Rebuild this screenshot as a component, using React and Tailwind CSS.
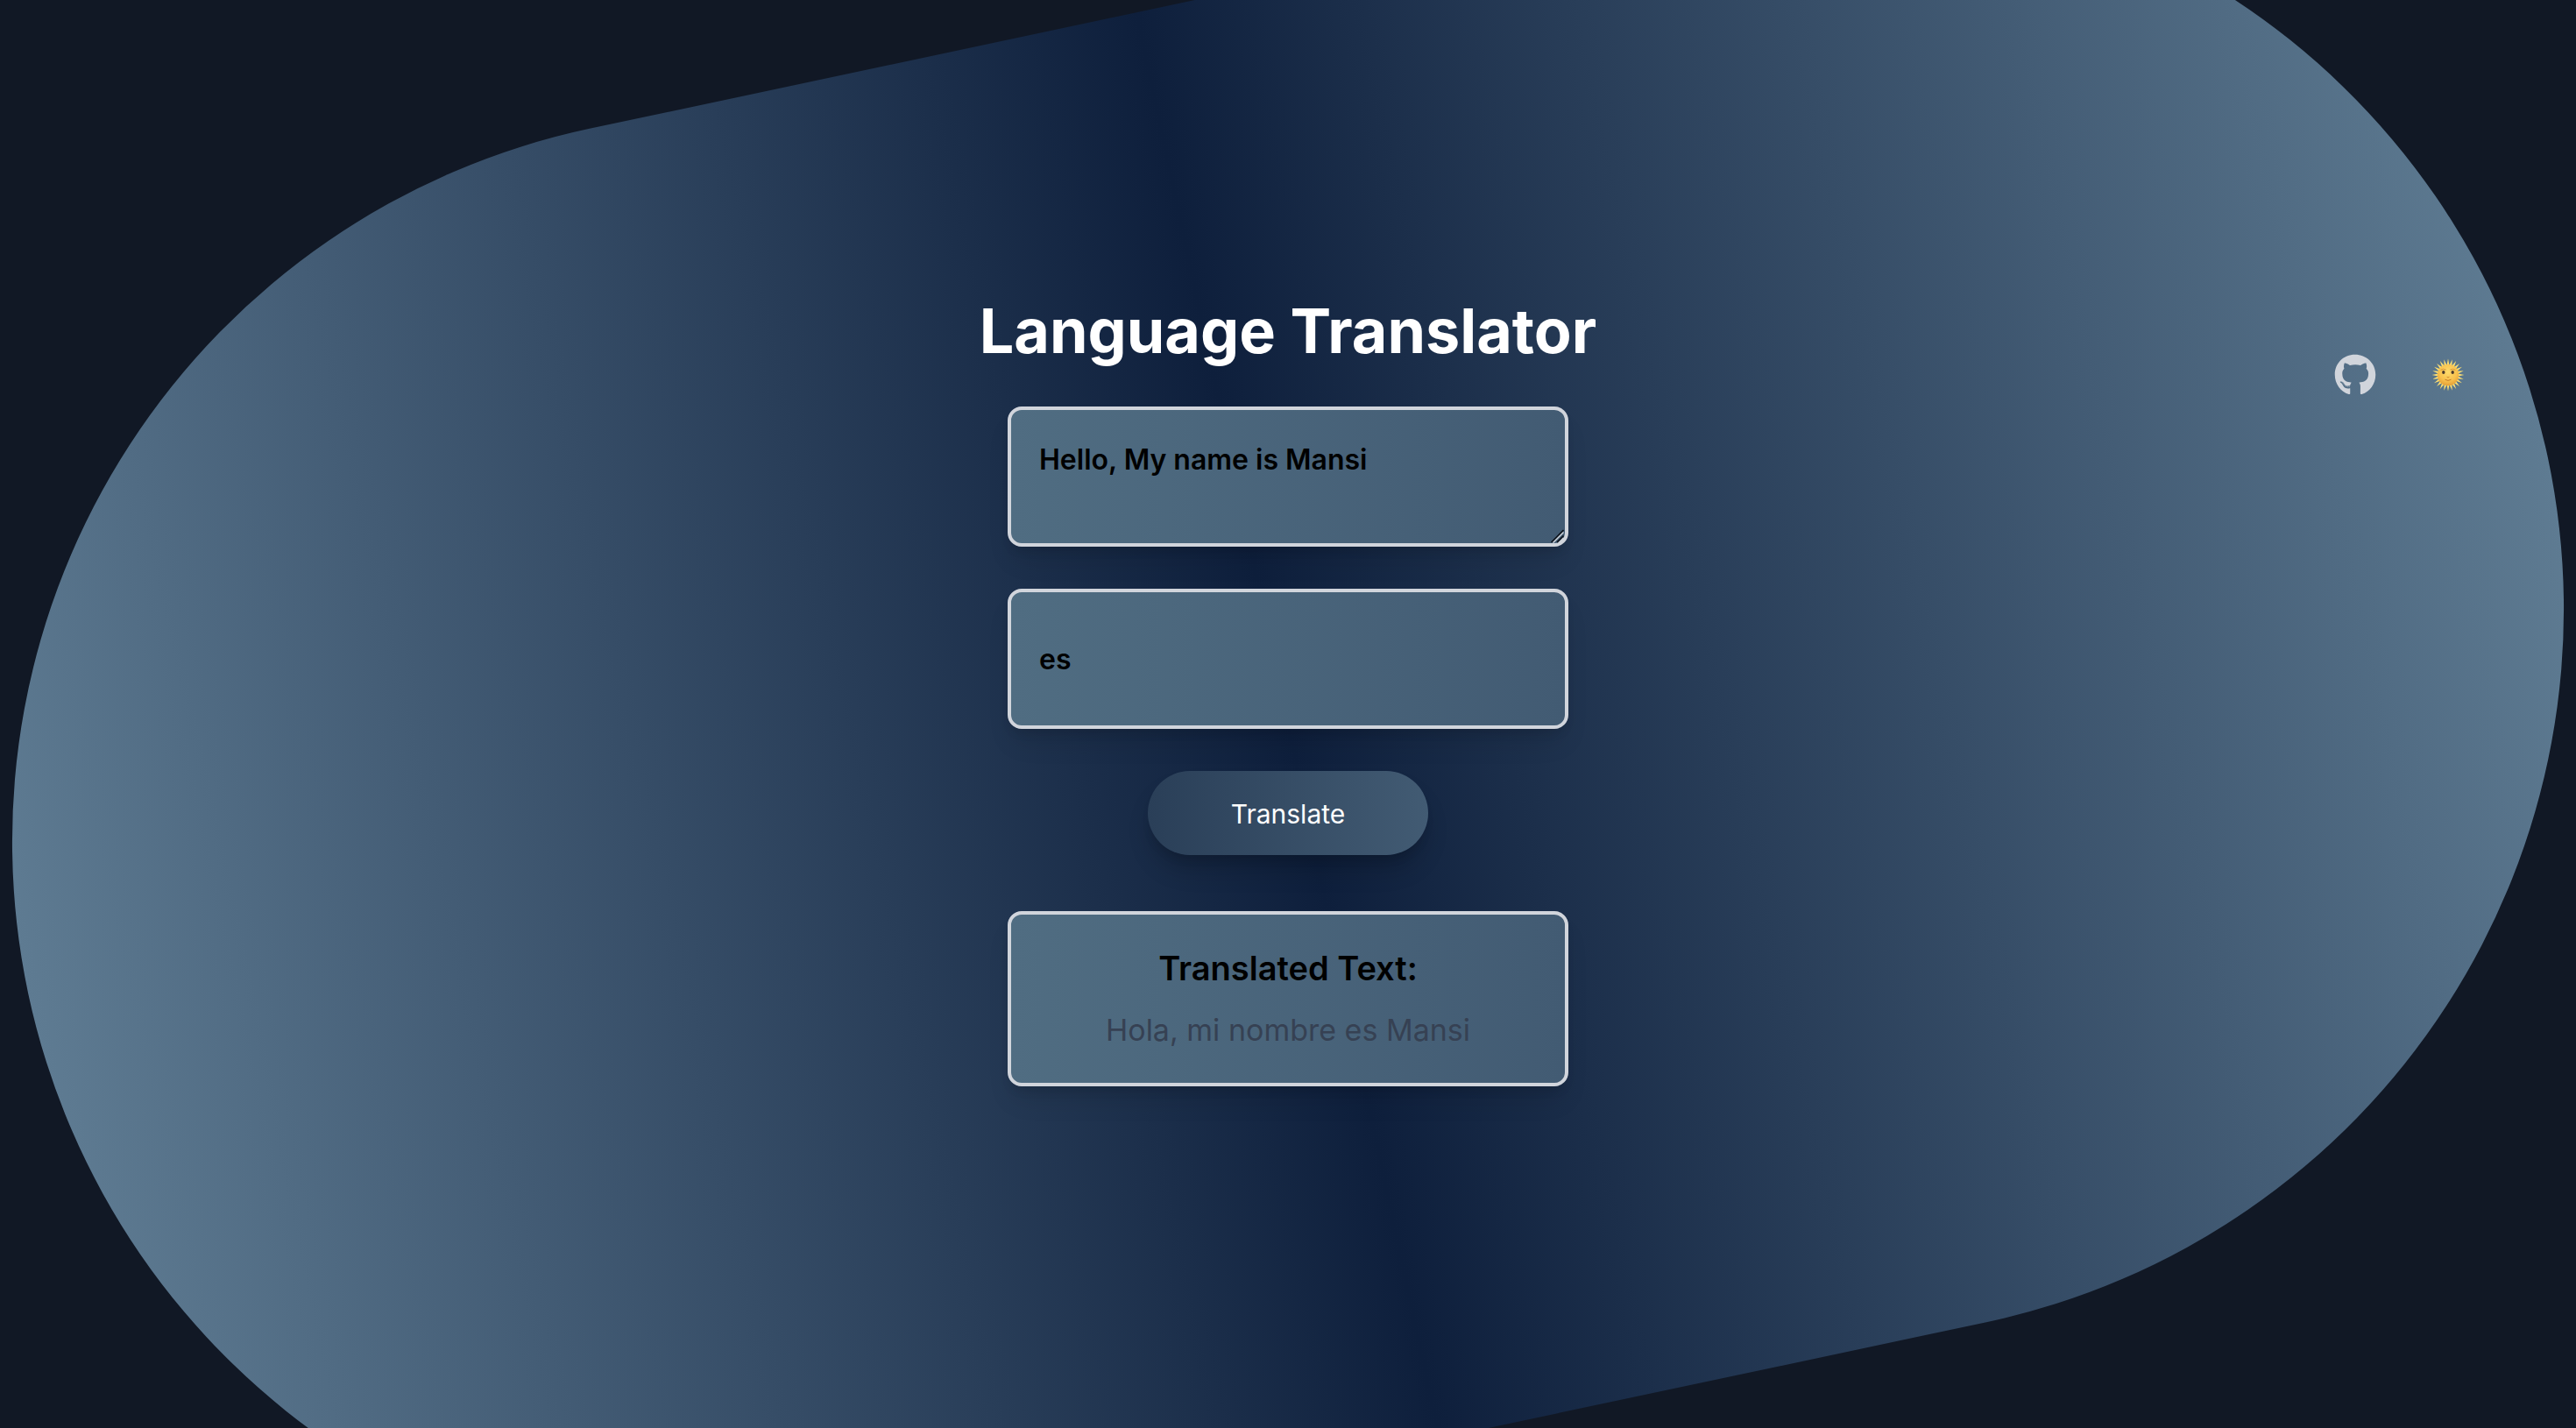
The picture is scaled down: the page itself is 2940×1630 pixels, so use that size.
import { useState } from "react";
import { FaGithub } from "react-icons/fa";

const RAYS = Array.from({ length: 24 }, (_, i) => i * 15);

const PANEL =
  "w-full rounded-2xl border-4 border-gray-300 bg-linear-to-r/srgb from-[#506d82] to-[#425b73] text-black shadow-[0_20px_30px_-6px_rgba(0,0,0,0.1),0_8px_12px_-4px_rgba(0,0,0,0.1)]";

function SunFace() {
  return (
    <svg viewBox="0 0 48 48" className="size-12" aria-hidden="true">
      <defs>
        <radialGradient id="face" cx="50%" cy="35%" r="65%">
          <stop offset="0%" stopColor="#fddb6c" />
          <stop offset="65%" stopColor="#f8c14d" />
          <stop offset="100%" stopColor="#e5a038" />
        </radialGradient>
      </defs>
      {RAYS.map((angle) => (
        <path key={angle} d="M22.6 12.8 24 5.6 25.4 12.8Z" fill="#ffe173" transform={`rotate(${angle} 24 24)`} />
      ))}
      <circle cx="24" cy="24" r="12.2" fill="url(#face)" />
      <ellipse cx="18.8" cy="21" rx="1.7" ry="1.9" fill="#4b3a2c" />
      <ellipse cx="29.2" cy="21" rx="1.7" ry="1.9" fill="#4b3a2c" />
      <path d="M15.6 18.4q2.6-2 6-.4M26.4 18q3.400-1.600 6 .4" fill="none" stroke="#d6933a" strokeWidth="1" />
      <path d="M22.6 26.2q1.400 1.400 2.800 0" fill="none" stroke="#cf8a30" strokeWidth="1" />
      <path d="M20.5 29.200q3.500 2.400 7 0" fill="none" stroke="#c47a2c" strokeWidth="1" />
    </svg>
  );
}

function ResizeGrip() {
  return (
    <svg viewBox="0 0 16 16" className="pointer-events-none absolute right-1 bottom-1 size-4" aria-hidden="true" fill="none" strokeWidth="1.5">
      <path d="M2.5 15.5 14.5 3.5M9 15.5l5.5-5.5" stroke="#d1d5db" />
      <path d="M.5 15 14.5 1M7 15l7.5-7.5" stroke="#0b0f16" />
    </svg>
  );
}

export default function App() {
  const [source, setSource] = useState("Hello, My name is Mansi");
  const [language, setLanguage] = useState("es");

  return (
    <div className="relative isolate flex min-h-screen flex-col items-center overflow-hidden bg-[#111825] pt-[332px] font-['Inter',sans-serif]">
      <div className="absolute inset-x-0 -top-1 -bottom-[30px] -z-10 -rotate-12 rounded-full bg-linear-to-r/srgb from-[#5e7b92] via-[#0e1f3c] to-[#5e7b92]" />

      <nav className="absolute top-[404px] right-[122px] flex items-center gap-[58px]" aria-label="Page">
        <a href="#github" aria-label="GitHub" className="text-gray-300">
          <FaGithub className="size-12" />
        </a>
        <button type="button" aria-label="Toggle theme">
          <SunFace />
        </button>
      </nav>

      <h1 className="text-[70px] leading-[92px] font-bold text-white">Language Translator</h1>

      <main className="mt-10 flex w-[640px] flex-col items-center">
        <div className="relative flex w-full">
          <textarea
            aria-label="Text to translate"
            value={source}
            onChange={(e) => setSource(e.target.value)}
            className={`${PANEL} h-40 resize-none px-8 py-8 text-[32px] leading-[50px] font-semibold`}
          />
          <ResizeGrip />
        </div>
        <input
          aria-label="Target language"
          value={language}
          onChange={(e) => setLanguage(e.target.value)}
          className={`${PANEL} mt-12 h-40 px-8 text-[32px] font-semibold`}
        />
        <button
          type="button"
          className="mt-12 h-24 w-80 rounded-full bg-linear-to-r/srgb from-[#2a3f58] to-[#425b73] pt-[2px] text-[30px] text-white shadow-[0_20px_30px_-6px_rgba(0,0,0,0.2),0_8px_12px_-4px_rgba(0,0,0,0.1)]"
        >
          Translate
        </button>
        <section className={`${PANEL} mt-16 px-8 pt-8 pb-[30px] text-center`}>
          <h2 className="text-[38px] leading-[58px] font-semibold">Translated Text:</h2>
          <p className="mt-3 text-[34px] leading-[60px] text-gray-700">Hola, mi nombre es Mansi</p>
        </section>
      </main>
    </div>
  );
}
